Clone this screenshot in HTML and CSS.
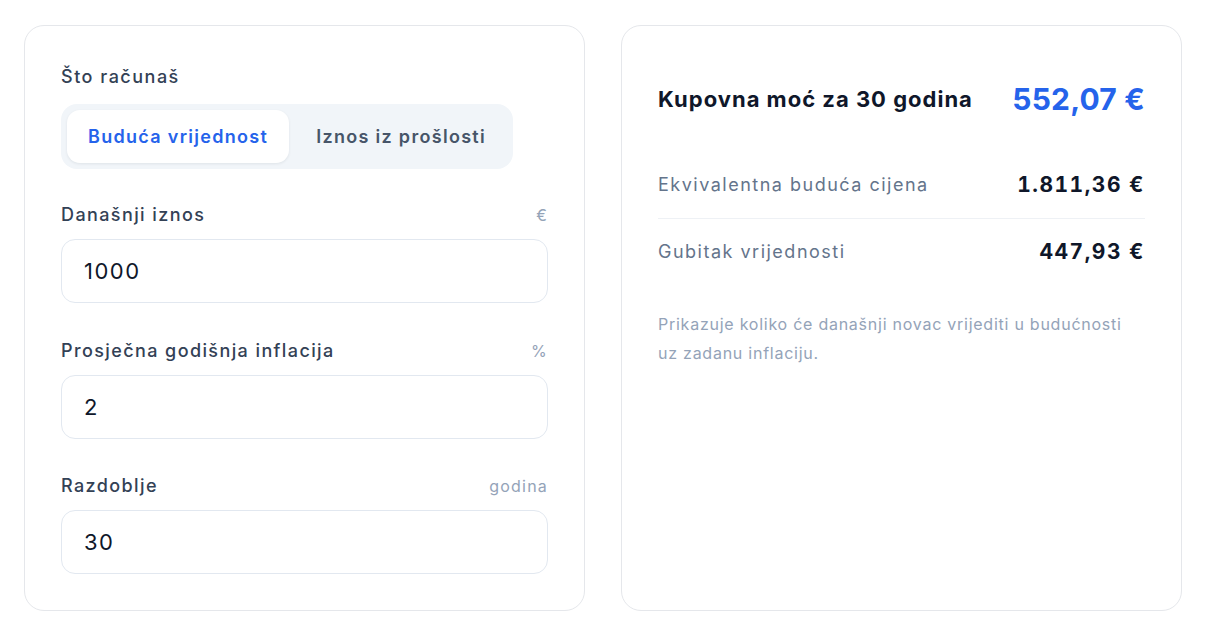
FILE: index.html
```html
<!DOCTYPE html>
<html lang="hr">
<head>
<meta charset="utf-8">
<title>Kalkulator inflacije</title>
<link rel="stylesheet" href="styles.css">
</head>
<body>
<main class="layout">
  <section class="card form-card">
    <div class="field-label">Što računaš</div>
    <div class="segment">
      <button class="seg-btn active">Buduća vrijednost</button>
      <button class="seg-btn">Iznos iz prošlosti</button>
    </div>

    <div class="field">
      <div class="label-row"><span class="label">Današnji iznos</span><span class="unit">€</span></div>
      <input class="input" type="text" value="1000">
    </div>

    <div class="field">
      <div class="label-row"><span class="label">Prosječna godišnja inflacija</span><span class="unit">%</span></div>
      <input class="input" type="text" value="2">
    </div>

    <div class="field">
      <div class="label-row"><span class="label">Razdoblje</span><span class="unit">godina</span></div>
      <input class="input" type="text" value="30">
    </div>
  </section>

  <section class="card result-card">
    <div class="result-head">
      <span class="result-title">Kupovna moć za 30 godina</span>
      <span class="result-main">552,07 €</span>
    </div>
    <div class="result-row">
      <span class="row-label">Ekvivalentna buduća cijena</span>
      <span class="row-value">1.811,36 €</span>
    </div>
    <div class="result-row">
      <span class="row-label">Gubitak vrijednosti</span>
      <span class="row-value">447,93 €</span>
    </div>
    <p class="note">Prikazuje koliko će današnji novac vrijediti u budućnosti uz zadanu inflaciju.</p>
  </section>
</main>
</body>
</html>
```

FILE: styles.css
```css
* { box-sizing: border-box; }

html, body {
  margin: 0;
  background: #ffffff;
}

body {
  font-family: Inter, "Noto Sans", "Liberation Sans", sans-serif;
  color: #0f172a;
  padding: 25px 24px;
}

.layout {
  display: grid;
  grid-template-columns: 1fr 1fr;
  gap: 36px;
}

.card {
  border: 1px solid #e5e7eb;
  border-radius: 20px;
  padding: 36px;
  background: #fff;
}

.form-card {
  display: flex;
  flex-direction: column;
}

.field-label {
  font-size: 18px;
  line-height: 30px;
  font-weight: 500;
  letter-spacing: 1.5px;
  color: #334155;
  margin-bottom: 12px;
}

.segment {
  display: flex;
  align-self: flex-start;
  gap: 6px;
  padding: 6px;
  background: #f1f5f9;
  border-radius: 16px;
}

.seg-btn {
  font-family: inherit;
  font-size: 18px;
  line-height: 29px;
  font-weight: 600;
  letter-spacing: 1.3px;
  color: #475569;
  background: transparent;
  border: 0;
  border-radius: 13px;
  padding: 12px 21px;
  cursor: pointer;
}

.seg-btn.active {
  background: #fff;
  color: #2563eb;
  box-shadow: 0 1px 3px rgba(15, 23, 42, 0.08);
}

.field {
  margin-top: 32px;
}

.field + .field {
  margin-top: 33.5px;
}

.label-row {
  display: flex;
  justify-content: space-between;
  align-items: baseline;
  margin-bottom: 10px;
}

.label {
  font-size: 18px;
  line-height: 28px;
  font-weight: 500;
  letter-spacing: 1.4px;
  color: #334155;
}

.unit {
  font-size: 16px;
  letter-spacing: 1.2px;
  color: #94a3b8;
}

.input {
  display: block;
  width: 100%;
  height: 64px;
  padding: 0 22px;
  font-family: inherit;
  font-size: 22px;
  letter-spacing: 1.5px;
  color: #0f172a;
  border: 1px solid #e2e8f0;
  border-radius: 14px;
  background: #fff;
  outline: none;
}

.result-head {
  display: flex;
  justify-content: space-between;
  align-items: center;
  padding: 19px 0;
  margin-bottom: 16px;
}

.result-title {
  font-size: 22px;
  line-height: 36px;
  font-weight: 700;
  letter-spacing: 1px;
  color: #0f172a;
}

.result-main {
  font-size: 30px;
  line-height: 36px;
  font-weight: 700;
  letter-spacing: 0.2px;
  color: #2563eb;
}

.result-row {
  display: flex;
  justify-content: space-between;
  align-items: center;
  padding: 19px 0;
}

.result-row + .result-row {
  border-top: 1px solid #eef1f5;
}

.row-label {
  font-size: 18px;
  line-height: 28px;
  letter-spacing: 1.5px;
  color: #64748b;
}

.row-value {
  font-size: 21px;
  line-height: 28px;
  font-weight: 700;
  letter-spacing: 1.5px;
  font-variant-numeric: tabular-nums;
  color: #0f172a;
}

.note {
  margin: 25px 0 0;
  font-size: 16px;
  line-height: 29px;
  letter-spacing: 0.75px;
  color: #94a3b8;
}
```
